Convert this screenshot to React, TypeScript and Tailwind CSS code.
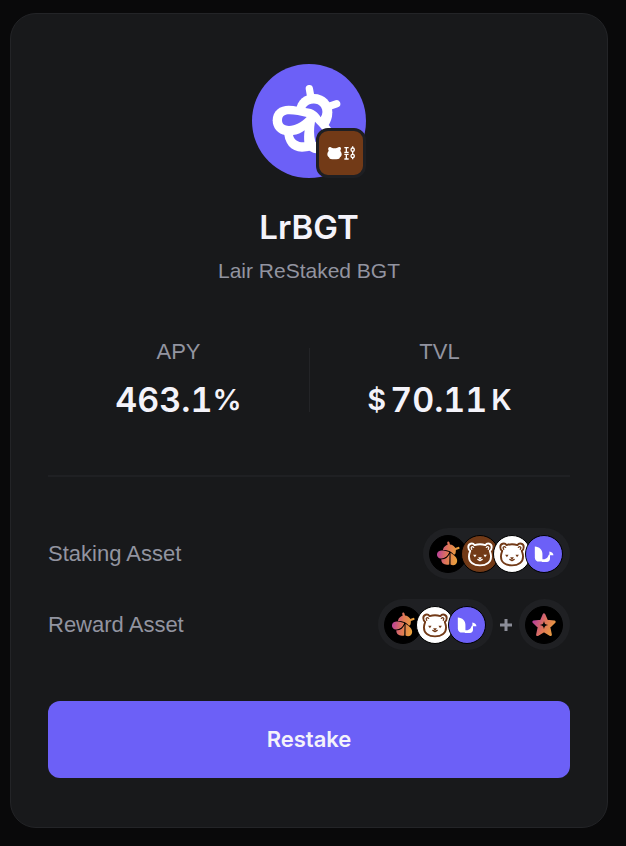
import type { ReactNode } from "react";

function BeeMark() {
  return (
    <svg viewBox="36 27 342 342" className="size-full" fill="none" aria-hidden="true">
      <path d="M208 101l5 28M290 146l-26 9" stroke="#fff" strokeWidth="22" strokeLinecap="round" />
      <g fill="#fff">
        <path d="M168 164c4-28 26-47 54-47 31 0 55 24 55 55 0 18-6 31-12 40l-50 20-50-40z" />
        <path d="M98 196c0-29 22-44 48-44 18 0 40 6 60 14l20 20-62 54h-28c-22-2-38-20-38-44z" />
        <path d="M132 226c0 38 20 64 54 64 10 0 18-1 24-4l16-6V176l-60 40z" />
        <path d="M206 166c34 16 76 50 80 84 2 28-22 46-48 46-14 0-24-4-32-10z" />
      </g>
      <g fill="#6c60f7">
        <path d="M196 159c10-16 36-18 47-3 6 9 6 21-1 31-8-14-20-26-46-28z" />
        <path d="M126 196c0-14 10-18 22-18 16 0 34 4 52 8-16 16-35 27-53 27-13 0-21-6-21-17z" />
        <path d="M159 240c13-1 25-6 35-14-2 12-2 24-1 36-17 1-31-6-34-22z" />
        <path d="M225 200c15 15 30 30 31 45-1 17-21 21-30 15-5-20-5-40-1-60z" />
      </g>
    </svg>
  );
}

function BadgeMark() {
  return (
    <svg viewBox="0 0 132 132" className="size-full" fill="none" aria-hidden="true">
      <path
        d="M29 58c-5-8 4-13 9-8 6 2 11 2 17 0 7-5 15 0 9 8 0 4 4 7 4 12 0 4-2 7-5 9-1 6-8 6-17 6s-15 0-16-6c-3-2-5-5-5-9 0-5 4-8 4-12z"
        fill="#fff"
      />
      <g stroke="#fff" strokeWidth="4">
        <path d="M76 50h13M76 64h13M82 50v14M76 70h13M76 84h13M82 70v14M101 46v5M101 61v8M101 80v5" />
        <circle cx="101" cy="56" r="5" />
        <circle cx="101" cy="75" r="5" />
      </g>
    </svg>
  );
}

function SmallBee({ id }: { id: string }) {
  return (
    <svg viewBox="40 44 114 114" className="size-full" aria-hidden="true">
      <defs>
        <linearGradient id={id} x1="62" y1="95" x2="126" y2="105" gradientUnits="userSpaceOnUse">
          <stop stopColor="#b83f9b" />
          <stop offset="0.5" stopColor="#df7658" />
          <stop offset="1" stopColor="#e9a03c" />
        </linearGradient>
      </defs>
      <path d="M98 65l3 12M130 82l-14 5" stroke={`url(#${id})`} strokeWidth="7" strokeLinecap="round" />
      <g fill={`url(#${id})`}>
        <path d="M81 88c2-11 11-17 22-17 15 1 23 15 17 30l-4 2c-4-4-8-8-13-11-7-3-14-4-22-4z" />
        <path d="M101 95c-10-4-26-7-33-3-10 6-7 22 6 23 13 1 22-7 27-20z" />
        <path d="M102 100c-5 11-13 18-26 18-1 13 10 19 25 16z" />
        <path d="M105 97c13 8 22 17 21 27-1 12-13 15-21 10z" />
      </g>
    </svg>
  );
}

function BearMark({ color }: { color: string }) {
  return (
    <svg viewBox="0 0 114 114" className="size-full" fill="none" aria-hidden="true">
      <g stroke={color} strokeWidth="6" strokeLinejoin="round" strokeLinecap="round">
        <path d="M40 29c11-4 23-4 34 0 6-9 21-5 20 7 0 5-2 9-6 11 3 8 4 12 4 18 0 20-16 28-35 28s-35-8-35-28c0-6 1-10 4-18-4-2-6-6-6-11-1-12 14-16 20-7z" />
        <path d="M31 42c-5-7 1-11 6-6M83 42c5-7-1-11-6-6" strokeWidth="4" />
        <path d="M50 74l7 4 7-4" strokeWidth="4" />
      </g>
      <path d="M35 59h11l-5 8zM68 59h11l-6 8zM51 67h12l-6 9z" fill={color} />
    </svg>
  );
}

function LairMark() {
  return (
    <svg viewBox="0 0 114 114" className="size-full" fill="#fff" aria-hidden="true">
      <path d="M28 33c14 1 24 10 24 24v24H42c-9 0-14-5-14-14z" />
      <path d="M50 82V74c13 0 19-5 22-15h4v13c0 6-4 10-10 10z" />
      <path d="M74 49c8 1 12 5 13 12H74z" />
    </svg>
  );
}

function StarMark() {
  return (
    <svg viewBox="0 0 114 114" className="size-full" aria-hidden="true">
      <defs>
        <linearGradient id="star" x1="22" y1="45" x2="92" y2="75" gradientUnits="userSpaceOnUse">
          <stop stopColor="#b83f9b" />
          <stop offset="0.5" stopColor="#df7658" />
          <stop offset="1" stopColor="#e9a03c" />
        </linearGradient>
      </defs>
      <path
        d="M57 24l9 20 24 3-17 17 5 24-21-12-21 12 5-24-17-17 24-3z"
        fill="url(#star)"
        stroke="url(#star)"
        strokeWidth="8"
        strokeLinejoin="round"
      />
      <path d="M57 44c2 9 4 11 13 13-9 2-11 4-13 13-2-9-4-11-13-13 9-2 11-4 13-13z" fill="#050505" />
    </svg>
  );
}

function Token({ className, children }: { className: string; children: ReactNode }) {
  return (
    <span className={`-ml-1.5 size-[38px] overflow-hidden rounded-full border border-black first:ml-0 ${className}`}>
      {children}
    </span>
  );
}

function TokenGroup({ children }: { children: ReactNode }) {
  return <div className="flex h-[51px] items-center rounded-full bg-[#1f2023] pr-[7px] pl-1.5">{children}</div>;
}

function Stat({ label, children }: { label: string; children: ReactNode }) {
  return (
    <div className="flex flex-col items-center">
      <dt className="text-[22px] leading-8 text-[#9294a0]">{label}</dt>
      <dd className="mt-2 flex items-center font-['Inter',sans-serif] text-[34px] leading-12 font-semibold tabular-nums">
        {children}
      </dd>
    </div>
  );
}

export default function App() {
  return (
    <main className="min-h-screen bg-[#09090a] pt-[13px] pr-[18px] pb-[18px] pl-2.5 font-['Liberation_Sans',sans-serif] text-[#f4f3fa]">
      <section className="rounded-[26px] border border-[#232427] bg-[#18191b] px-[37px] pt-[50px] pb-[49px]">
        <div className="relative mx-auto size-[114px]">
          <div className="size-full rounded-full bg-[#6c60f7]">
            <BeeMark />
          </div>
          <div className="absolute right-0 bottom-0 size-[50px] rounded-xl border-3 border-[#1e1f23] bg-[#723a17]">
            <BadgeMark />
          </div>
        </div>

        <h1 className="mt-[29px] text-center font-['Inter',sans-serif] text-[33px] leading-10 font-semibold">LrBGT</h1>
        <p className="mt-2 text-center text-[21px] leading-8 text-[#9294a0]">Lair ReStaked BGT</p>

        <dl className="relative mt-[49px] grid grid-cols-2">
          <Stat label="APY">
            463.1<span className="text-[29px]">%</span>
          </Stat>
          <Stat label="TVL">
            <span className="mr-1 text-[29px]">$</span>70.11<span className="ml-1 text-[29px]">K</span>
          </Stat>
          <div className="absolute inset-y-3 left-1/2 w-px bg-[#232427]" />
        </dl>

        <hr className="mt-[51px] border-t-2 border-[#1f2023]" />

        <div className="mt-[51px] flex flex-col gap-5">
          <div className="flex items-center justify-between">
            <span className="text-[22px] leading-8 text-[#9294a0]">Staking Asset</span>
            <TokenGroup>
              <Token className="bg-black">
                <SmallBee id="bee-staking" />
              </Token>
              <Token className="bg-[#723a17]">
                <BearMark color="#fff" />
              </Token>
              <Token className="bg-white">
                <BearMark color="#723a17" />
              </Token>
              <Token className="bg-[#6c60f7]">
                <LairMark />
              </Token>
            </TokenGroup>
          </div>
          <div className="flex items-center justify-between">
            <span className="text-[22px] leading-8 text-[#9294a0]">Reward Asset</span>
            <div className="flex items-center gap-1.5">
              <TokenGroup>
                <Token className="bg-black">
                  <SmallBee id="bee-reward" />
                </Token>
                <Token className="bg-white">
                  <BearMark color="#723a17" />
                </Token>
                <Token className="bg-[#6c60f7]">
                  <LairMark />
                </Token>
              </TokenGroup>
              <svg viewBox="0 0 14 14" className="size-3.5" stroke="#8b8d98" strokeWidth="3" aria-hidden="true">
                <path d="M7 1v12M1 7h12" />
              </svg>
              <TokenGroup>
                <Token className="bg-black">
                  <StarMark />
                </Token>
              </TokenGroup>
            </div>
          </div>
        </div>

        <button
          type="button"
          className="mt-[51px] h-[77px] w-full cursor-pointer rounded-xl bg-[#6c60f7] font-['Inter',sans-serif] text-[22px] font-semibold hover:bg-[#7a6ff8]"
        >
          Restake
        </button>
      </section>
    </main>
  );
}
